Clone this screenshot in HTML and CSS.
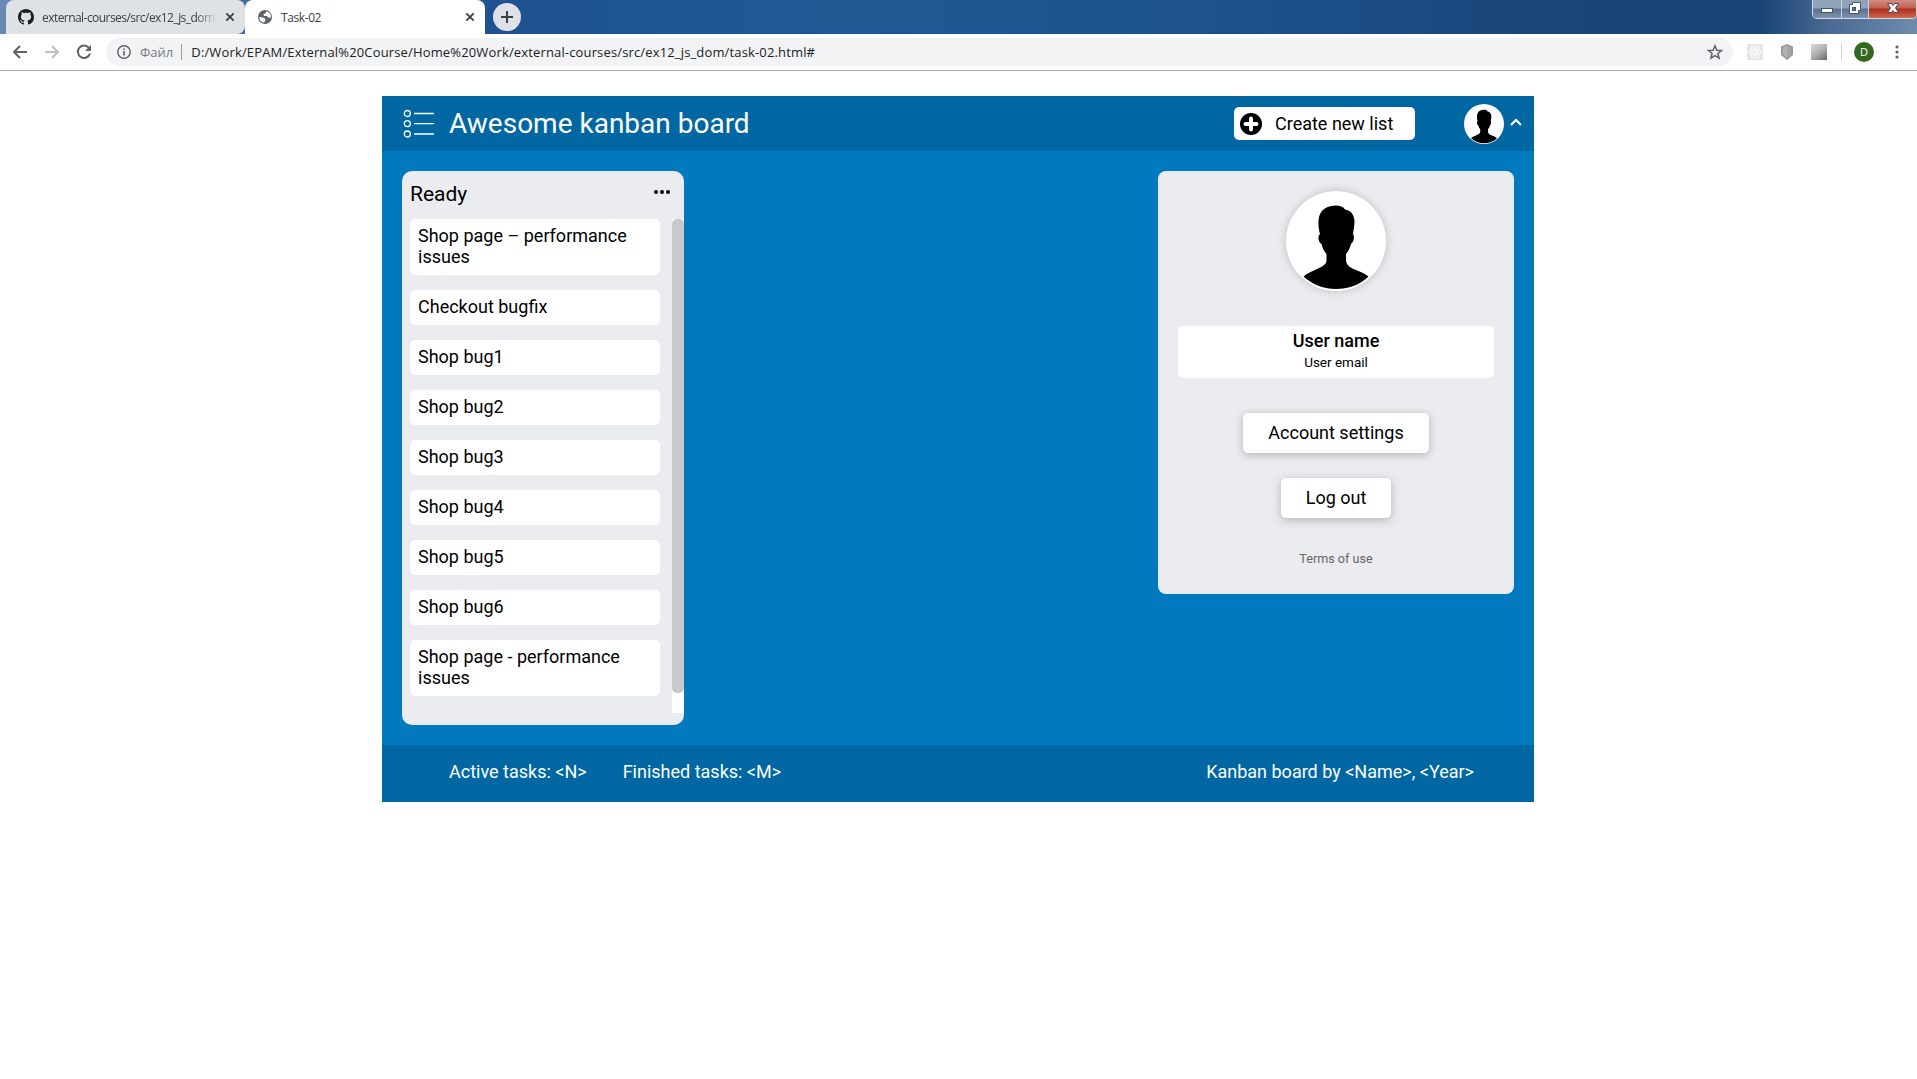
FILE: index.html
```html
<!DOCTYPE html>
<html lang="en">
<head>
<meta charset="utf-8">
<title>Task-02</title>
<link rel="stylesheet" href="styles.css">
</head>
<body>
<svg class="defs" width="0" height="0" aria-hidden="true">
  <symbol id="person" viewBox="0 0 100 100">
    <path d="M50 14.500C54 14.500 57 15.500 59 18.500C65 19 68 24 68.500 30C68.500 35 67.500 39 67 43C68.500 45 68.500 50 65 53C64 57 62.500 60 60 63V70C61 75 65 77 70 79C75 81 79.500 83 82.500 85.500C74 94 62 98 50 98C38 98 27 94 17.500 85.500C21 82 26 80.500 31 78C35 76 40 74 40.500 70V63C38 60 36.500 57 35.500 53C32 51 31.500 45 34 43C32.500 38 32 31 33 26C35 18 42 14.500 50 14.500Z"/>
  </symbol>
  <symbol id="close" viewBox="0 0 10 10"><path d="M1.300 1.300 8.700 8.700M8.700 1.300 1.300 8.700" fill="none" stroke="#3c4043" stroke-width="1.800"/></symbol>
</svg>

<div class="browser">
  <div class="tabstrip">
    <div class="tab tab-idle">
      <svg class="favicon" viewBox="0 0 16 16"><path fill="#1b1f23" d="M8 0C3.580 0 0 3.580 0 8c0 3.540 2.290 6.530 5.470 7.590.4.070.55-.17.55-.38 0-.19-.01-.82-.01-1.490-2.010.37-2.530-.49-2.690-.94-.09-.23-.48-.94-.82-1.130-.28-.15-.68-.52-.01-.53.63-.01 1.080.58 1.230.82.72 1.210 1.870.87 2.330.66.07-.52.28-.87.51-1.070-1.780-.2-3.640-.89-3.640-3.950 0-.87.31-1.590.82-2.150-.08-.2-.36-1.020.08-2.120 0 0 .67-.21 2.200.82.64-.18 1.320-.27 2-.27s1.360.09 2 .27c1.530-1.040 2.200-.82 2.200-.82.44 1.100.16 1.920.08 2.120.51.56.82 1.270.82 2.150 0 3.070-1.870 3.750-3.650 3.950.29.25.54.73.54 1.480 0 1.070-.01 1.930-.01 2.200 0 .21.15.46.55.38A8.010 8.010 0 0 0 16 8c0-4.420-3.580-8-8-8z"/></svg>
      <span class="tab-title tab-title-fade">external-courses/src/ex12_js_dom</span>
      <svg class="tab-close"><use href="#close"/></svg>
    </div>
    <div class="tab tab-active">
      <svg class="favicon" viewBox="0 0 16 16"><circle cx="8" cy="8" r="7" fill="#5f6368"/><path fill="#fff" d="M9.500 2.200 8.500 4.300 6.500 5 7 7H10l1 1.500 2.800.2A6 6 0 0 0 9.500 2.200ZM2.200 8 6 8.500 8.500 10 8 12 7 13.700A6 6 0 0 1 2.200 8Z"/></svg>
      <span class="tab-title">Task-02</span>
      <svg class="tab-close"><use href="#close"/></svg>
    </div>
    <div class="new-tab"><svg width="12" height="12" viewBox="0 0 12 12"><path d="M6 0V12M0 6H12" stroke="#3c4043" stroke-width="2"/></svg></div>
    <div class="window-controls">
      <span class="control minimize"><svg width="28" height="18" viewBox="0 0 28 18"><rect x="8.500" y="8.500" width="11" height="4" fill="#fff" stroke="#47536b"/></svg></span>
      <span class="control restore"><svg width="26" height="18" viewBox="0 0 26 18"><path d="M10.500 2.500H18.500V10.500H16.500V13.500H7.500V4.500H10.500Z" fill="#fff" stroke="#47536b"/><rect x="10.500" y="7.500" width="3" height="3" fill="#64758f" stroke="#47536b"/></svg></span>
      <span class="control shut"><svg width="47" height="18" viewBox="0 0 47 18"><path d="M18.500 3.500H22.500L24 5.500 25.500 3.500H29.500L26.500 8 29.500 12.500H25.500L24 10.500 22.500 12.500H18.500L21.500 8Z" fill="#fff" stroke="#5c4650"/></svg></span>
    </div>
  </div>
  <div class="toolbar">
    <svg class="nav" viewBox="0 0 16 16"><path d="M15 8H2.500M8 2 2 8 8 14" fill="none" stroke="#5f6368" stroke-width="2"/></svg>
    <svg class="nav" viewBox="0 0 16 16"><path d="M1 8H13.500M8 2 14 8 8 14" fill="none" stroke="#bdbfc1" stroke-width="2"/></svg>
    <svg class="nav" viewBox="0 0 16 16"><path d="M13.200 4.200A6.200 6.200 0 1 0 14 9.500" fill="none" stroke="#5f6368" stroke-width="2"/><path d="M15 1V7H9Z" fill="#5f6368"/></svg>
    <div class="omnibox">
      <svg class="info" viewBox="0 0 14 14"><circle cx="7" cy="7" r="6.200" fill="none" stroke="#5f6368" stroke-width="1.400"/><path d="M7 6V10.500M7 3.400V5" stroke="#5f6368" stroke-width="1.600"/></svg>
      <span class="scheme">Файл</span>
      <span class="url">D:/Work/EPAM/External%20Course/Home%20Work/external-courses/src/ex12_js_dom/task-02.html#</span>
      <svg class="star" viewBox="0 0 16 16"><path d="M8 1.800 9.800 6.200 14.500 6.500 10.900 9.500 12.100 14.100 8 11.600 3.900 14.100 5.100 9.500 1.500 6.500 6.200 6.200Z" fill="none" stroke="#5f6368" stroke-width="1.500"/></svg>
    </div>
    <div class="extensions">
      <svg width="16" height="16" viewBox="0 0 16 16"><rect width="16" height="16" fill="#e4e4e4"/><g fill="none" stroke="#fff"><ellipse cx="8" cy="8" rx="6.500" ry="2.500"/><ellipse cx="8" cy="8" rx="6.500" ry="2.500" transform="rotate(60 8 8)"/><ellipse cx="8" cy="8" rx="6.500" ry="2.500" transform="rotate(120 8 8)"/></g><circle cx="8" cy="8" r="1.300" fill="#fff"/></svg>
      <svg width="16" height="16" viewBox="0 0 16 16"><path d="M8 0 14 2.500V11L8 16 2 11V2.500Z" fill="#999"/><path d="M8 2V14L4 10.500V3.500Z" fill="#b3b3b3"/><path d="M8 2V14L12 10.500V3.500Z" fill="#a5a5a5"/></svg>
      <span class="gradient-ext"></span>
    </div>
    <span class="profile">D</span>
    <svg class="more" viewBox="0 0 4 14"><g fill="#5f6368"><circle cx="2" cy="2" r="1.600"/><circle cx="2" cy="7" r="1.600"/><circle cx="2" cy="12" r="1.600"/></g></svg>
  </div>
</div>

<div class="app">
  <header class="header">
    <svg class="logo" width="32" height="30" viewBox="0 0 32 30"><g fill="none" stroke="#fff" stroke-width="1.300"><circle cx="4.300" cy="4.500" r="3"/><circle cx="4.300" cy="14.700" r="3"/><circle cx="4.300" cy="25" r="3"/><path d="M11 4.500H31M11 14.700H31M11 25H31"/></g></svg>
    <h1 class="title">Awesome kanban board</h1>
    <button class="create"><svg width="22" height="22" viewBox="0 0 22 22"><circle cx="11" cy="11" r="11"/><path d="M11 5.500V16.500M5.500 11H16.500" stroke="#fff" stroke-width="4" stroke-linecap="round"/></svg><span>Create new list</span></button>
    <div class="account">
      <span class="avatar avatar-small"><svg viewBox="0 0 100 100"><use href="#person"/></svg></span>
      <svg class="chevron" width="12" height="8" viewBox="0 0 12 8"><path d="M1 7 6 2 11 7" fill="none" stroke="#fff" stroke-width="2"/></svg>
    </div>
  </header>
  <main class="board">
    <section class="list">
      <div class="list-head">
        <h2 class="list-title">Ready</h2>
        <svg class="list-menu" width="16" height="4" viewBox="0 0 16 4"><circle cx="2" cy="2" r="2"/><circle cx="8" cy="2" r="2"/><circle cx="14" cy="2" r="2"/></svg>
      </div>
      <div class="list-body">
        <div class="cards">
          <div class="card">Shop page – performance issues</div>
          <div class="card">Checkout bugfix</div>
          <div class="card">Shop bug1</div>
          <div class="card">Shop bug2</div>
          <div class="card">Shop bug3</div>
          <div class="card">Shop bug4</div>
          <div class="card">Shop bug5</div>
          <div class="card">Shop bug6</div>
          <div class="card">Shop page - performance issues</div>
        </div>
        <div class="scrollbar"><div class="thumb"></div></div>
      </div>
    </section>
    <aside class="user">
      <span class="avatar avatar-large"><svg viewBox="0 0 100 100"><use href="#person"/></svg></span>
      <div class="user-info">
        <div class="user-name">User name</div>
        <div class="user-email">User email</div>
      </div>
      <button class="user-button settings">Account settings</button>
      <button class="user-button logout">Log out</button>
      <a class="terms">Terms of use</a>
    </aside>
  </main>
  <footer class="footer">
    <span>Active tasks: &lt;N&gt;</span>
    <span>Finished tasks: &lt;M&gt;</span>
    <span class="credit">Kanban board by &lt;Name&gt;, &lt;Year&gt;</span>
  </footer>
</div>
</body>
</html>
```
FILE: styles.css
```css
* { box-sizing: border-box; }
body { margin: 0; background: #fff; color: #000; font: 18px/21px Roboto, sans-serif; overflow: hidden; }
h1, h2 { margin: 0; font-weight: 400; }
button { border: 0; padding: 0; font: inherit; color: inherit; background: #fff; border-radius: 5px; }
svg { display: block; flex: none; }
.defs { position: absolute; }

/* Browser window */
.browser { height: 71px; border-bottom: 1px solid #a9a9a9; font-family: "Open Sans", "Noto Sans", sans-serif; }
.tabstrip { display: flex; height: 34px; padding-left: 6px; background: linear-gradient(90deg, #6a89b4 0, #4d76ad 160px, #1f5191 480px, #1f5a95 850px, #1c4f89 1300px, #194476 1600px, #194476 1760px, #4a6a94 1830px, #6f8cab 1917px); }
.tab { display: flex; flex: none; align-items: center; height: 34px; border-radius: 8px 8px 0 0; color: #3c4043; }
.tab-idle { width: 239px; padding: 0 10px 0 12px; background: #dee1e6; border-radius: 8px 8px 8px 0; }
.tab-active { width: 240px; padding: 0 10px 0 12px; background: #fff; }
.favicon { width: 16px; height: 16px; }
.tab-title { flex: 1; margin: 0 8px; overflow: hidden; white-space: nowrap; font-size: 12px; letter-spacing: -0.4px; }
.tab-title-fade { letter-spacing: -0.55px; -webkit-mask-image: linear-gradient(90deg, #000 88%, transparent); mask-image: linear-gradient(90deg, #000 88%, transparent); }
.tab-close { width: 10px; height: 10px; }
.new-tab { display: grid; place-items: center; width: 28px; height: 28px; margin: 3px 0 0 8px; border-radius: 50%; background: #dee1e6; }
.window-controls { display: flex; height: 19px; margin: 0 0 0 auto; border: 1px solid #d2dae5; border-top: 0; border-radius: 0 0 5px 5px; overflow: hidden; }
.control { border-right: 1px solid #c9d2de; background: linear-gradient(#91a3ba 0 45%, #5a7190 50%, #8193ad); }
.shut { border: 0; background: linear-gradient(#cf8c82 0, #c2604f 45%, #ac2c18 50%, #d26a50); }
.toolbar { display: flex; align-items: center; height: 36px; padding: 0 10px 0 12px; }
.nav { width: 16px; height: 16px; margin-right: 16px; }
.omnibox { display: flex; align-items: center; flex: 1; height: 28px; margin-left: -2px; padding: 0 10px 0 11px; border-radius: 14px; background: #f1f3f4; white-space: nowrap; }
.info { width: 14px; height: 14px; }
.scheme { margin-left: 9px; padding-right: 8px; border-right: 1px solid #9aa0a6; line-height: 16px; color: #777b80; font-size: 13px; }
.url { margin-left: 9px; color: #202124; font-size: 13px; letter-spacing: 0.15px; }
.star { width: 16px; height: 16px; margin-left: auto; }
.extensions { display: flex; gap: 16px; margin-left: 14px; padding-right: 14px; border-right: 1px solid #d0d0d0; }
.gradient-ext { width: 16px; height: 16px; background: linear-gradient(325deg, #666, #aaa 45%, #ddd); }
.profile { width: 20px; height: 20px; margin-left: 12px; border-radius: 50%; background: #33691e; color: #fff; font-size: 11px; line-height: 20px; text-align: center; }
.more { width: 4px; height: 14px; margin: 0 8px 0 21px; }

/* Kanban application */
.app { width: 1152px; margin: 25px auto 0 382px; background: #0079bf; }
.header { display: flex; align-items: center; height: 55px; padding: 0 12px 0 21px; background: #0067a3; color: #fff; }
.title { margin-left: 14px; font-size: 28px; line-height: 33px; }
.create { display: flex; align-items: center; width: 181px; height: 33px; margin-left: auto; padding-left: 6px; color: #000; }
.create span { margin-left: 13px; }
.account { display: flex; align-items: center; gap: 6px; margin-left: 49px; }
.chevron { margin-bottom: 3px; }
.avatar { display: block; border-radius: 50%; background: #fff; overflow: hidden; }
.avatar svg { width: 100%; height: 100%; }
.avatar-small { width: 40px; height: 40px; }
.avatar-large { width: 100px; height: 100px; box-shadow: 0 0 10px rgba(0, 0, 0, .2); }
.board { display: flex; align-items: flex-start; justify-content: space-between; height: 594px; padding: 20px; }
.list { width: 282px; height: 554px; border-radius: 10px; background: #ebecf0; }
.list-head { display: flex; justify-content: space-between; height: 48px; padding: 11px 14px 0 8px; }
.list-title { font-size: 21px; line-height: 25px; }
.list-menu { margin-top: 8px; }
.list-body { display: flex; justify-content: space-between; height: 494px; padding-left: 8px; }
.cards { display: flex; flex-direction: column; gap: 15px; width: 250px; }
.card { padding: 6px 8px 8px; border-radius: 5px; background: #fff; }
.scrollbar { width: 12px; background: #fff; }
.thumb { height: 474px; border-radius: 5px; background: #c9c9c9; }
.user { display: flex; flex-direction: column; align-items: center; width: 356px; height: 423px; padding: 20px; border-radius: 8px; background: #ebecf0; }
.user-info { width: 316px; height: 52px; margin-top: 35px; padding-top: 4px; border-radius: 5px; background: #fff; text-align: center; }
.user-name { font-weight: 500; }
.user-email { padding-top: 1px; font-size: 13.5px; }
.user-button { height: 40px; padding-bottom: 2px; box-shadow: 0 2px 10px rgba(0, 0, 0, .25); }
.settings { width: 186px; margin-top: 35px; }
.logout { width: 110px; margin-top: 25px; }
.terms { margin-top: 30px; font-size: 12.6px; color: #666; }
.footer { display: flex; align-items: center; gap: 36px; height: 57px; padding: 0 60px 4px 67px; background: #0067a3; color: #fff; }
.credit { margin-left: auto; }
```
